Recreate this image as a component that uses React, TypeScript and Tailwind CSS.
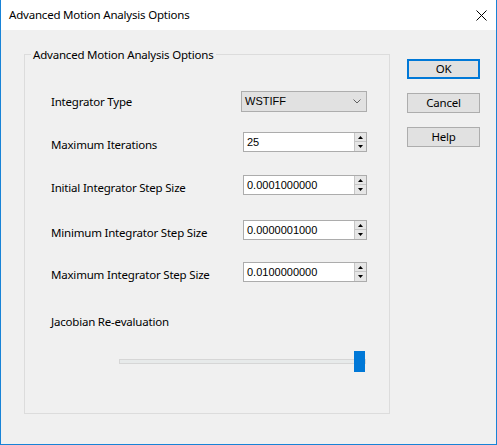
import React from "react";

function Spin({ value }: { value: string }) {
  return (
    <div className="ml-[2px] flex h-[20px] w-[124px] border border-[#acacac] bg-white">
      <div className="flex flex-1 items-center pl-[3px] font-['Liberation_Sans',sans-serif] text-[11px] leading-none tracking-normal text-black">
        {value}
      </div>
      <div className="flex w-[12px] flex-col">
        <div className="flex h-[9px] items-center justify-center border border-r-0 border-t-0 border-[#c6c6c6] bg-[#e6e6e6]">
          <svg width="5" height="3" viewBox="0 0 5 3">
            <path d="M2.5 0 L5 3 L0 3 Z" fill="#000" />
          </svg>
        </div>
        <div className="flex h-[9px] items-center justify-center border border-r-0 border-t-0 border-b-0 border-[#c6c6c6] bg-[#e6e6e6]">
          <svg width="5" height="3" viewBox="0 0 5 3">
            <path d="M0 0 L5 0 L2.5 3 Z" fill="#000" />
          </svg>
        </div>
      </div>
    </div>
  );
}

function Label({ children, shift }: { children: React.ReactNode; shift?: boolean }) {
  return (
    <div className={"w-[190px] leading-[16px] " + (shift ? "pt-[6px]" : "pt-0")}>{children}</div>
  );
}

function Btn({ children, primary }: { children: React.ReactNode; primary?: boolean }) {
  return (
    <div
      className={
        "flex h-[20px] w-[73px] items-center justify-center bg-[#e1e1e1] leading-none " +
        (primary ? "border-2 border-[#0078d7]" : "border border-[#adadad]")
      }
    >
      {children}
    </div>
  );
}

export default function App() {
  return (
    <div className="flex h-[445px] w-[497px] flex-col border-x border-b border-[#1883d7] bg-[#f0f0f0] font-['Noto_Sans',sans-serif] text-[11.5px] tracking-[-0.2px] text-black">
      <div className="flex h-[30px] items-center justify-between bg-white pl-[8px] pr-[9px]">
        <span className="leading-none">Advanced Motion Analysis Options</span>
        <svg width="11" height="11" viewBox="0 0 11 11">
          <path d="M0.5 0.5 L10.5 10.5 M10.5 0.5 L0.5 10.5" stroke="#000" strokeWidth="1" />
        </svg>
      </div>
      <div className="flex pl-[23px] pt-[24px]">
        <div className="relative h-[360px] w-[366px] border border-[#dcdcdc]">
          <span className="absolute left-[6px] top-[-8px] bg-[#f0f0f0] px-[2px] leading-[16px]">
            Advanced Motion Analysis Options
          </span>
          <div className="flex flex-col pl-[26px] pt-[36px]">
            <div className="flex h-[21px] items-center">
              <Label>Integrator Type</Label>
              <div className="flex h-[21px] w-[126px] items-center justify-between border border-[#adadad] bg-[#e1e1e1] pl-[3px] pr-[5px]">
                <span className="font-['Liberation_Sans',sans-serif] text-[11px] leading-none tracking-normal">WSTIFF</span>
                <svg width="8" height="5" viewBox="0 0 8 5">
                  <path d="M0.5 0.5 L4 4 L7.5 0.5" stroke="#606060" fill="none" strokeWidth="1" />
                </svg>
              </div>
            </div>
            <div className="mt-[20px] flex h-[20px] items-center">
              <Label shift>Maximum Iterations</Label>
              <Spin value="25" />
            </div>
            <div className="mt-[23px] flex h-[20px] items-center">
              <Label shift>Initial Integrator Step Size</Label>
              <Spin value="0.0001000000" />
            </div>
            <div className="mt-[25px] flex h-[20px] items-center">
              <Label shift>Minimum Integrator Step Size</Label>
              <Spin value="0.0000001000" />
            </div>
            <div className="mt-[22px] flex h-[20px] items-center">
              <Label shift>Maximum Integrator Step Size</Label>
              <Spin value="0.0100000000" />
            </div>
            <div className="mt-[32px] leading-[16px]">Jacobian Re-evaluation</div>
            <div className="relative ml-[68px] mt-[21px] flex h-[21px] w-[247px] items-center">
              <div className="h-[5px] w-full border border-[#d6d6d6] bg-[#e7eaea]" />
              <div className="absolute right-[1px] top-0 h-[21px] w-[11px] bg-[#0078d7]" />
            </div>
          </div>
        </div>
        <div className="ml-[17px] mt-[5px] flex flex-col gap-[14px]">
          <Btn primary>OK</Btn>
          <Btn>Cancel</Btn>
          <Btn>Help</Btn>
        </div>
      </div>
    </div>
  );
}
